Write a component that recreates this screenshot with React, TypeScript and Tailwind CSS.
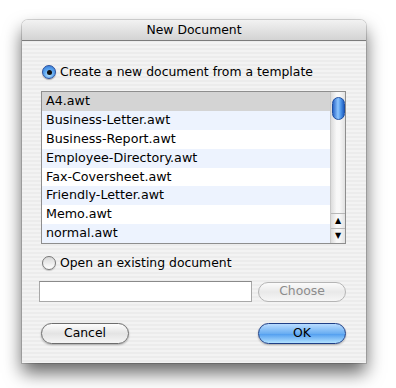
import React from "react";

const files = [
  "A4.awt",
  "Business-Letter.awt",
  "Business-Report.awt",
  "Employee-Directory.awt",
  "Fax-Coversheet.awt",
  "Friendly-Letter.awt",
  "Memo.awt",
  "normal.awt",
];

function Radio({ checked }: { checked?: boolean }) {
  return checked ? (
    <span className="flex h-[14px] w-[14px] shrink-0 items-center justify-center rounded-full border border-[#2a4f9c] bg-[radial-gradient(circle_at_50%_70%,#bfe6ff_0%,#5fa8f0_45%,#2f73d3_100%)] shadow-[0_1px_1px_rgba(0,0,0,0.3)]">
      <span className="h-[5px] w-[5px] rounded-full bg-[#111]" />
    </span>
  ) : (
    <span className="h-[14px] w-[14px] shrink-0 rounded-full border border-[#777] bg-[linear-gradient(#d8d8d8,#ffffff)] shadow-[0_1px_1px_rgba(0,0,0,0.2)]" />
  );
}

export default function App() {
  return (
    <div className="h-[388px] w-[396px] bg-white pl-[22px] pt-[20px] font-['Lucida_Grande','DejaVu_Sans',sans-serif] text-[13px] text-black">
      <div className="flex h-[343px] w-[344px] flex-col overflow-hidden rounded-t-[6px] bg-[repeating-linear-gradient(180deg,#ececec_0px,#ececec_2px,#f3f3f3_2px,#f3f3f3_4px)] shadow-[0_10px_18px_rgba(0,0,0,0.6),0_0_0_1px_rgba(0,0,0,0.15)]">
        {/* title bar */}
        <div className="flex h-[21px] shrink-0 items-center justify-center border-b border-[#7b7b7b] bg-[linear-gradient(#f2f2f2,#d3d3d3)] text-[12.4px] leading-none">
          New Document
        </div>

        <div className="flex flex-col pl-[19px] pr-[20px]">
          <div className="mt-[24px] flex h-[14px] items-center gap-[4px] pl-[1px]">
            <Radio checked />
            <span className="text-[12.4px] leading-none">Create a new document from a template</span>
          </div>

          {/* list */}
          <div className="mt-[12px] flex h-[153px] border border-[#8e8e8e] bg-white">
            <div className="flex flex-1 flex-col">
              {files.map((f, i) => (
                <div
                  key={f}
                  className={`flex h-[19px] items-center pl-[4px] text-[12.7px] leading-none ${
                    i === 0 ? "bg-[#d4d4d4]" : i % 2 === 1 ? "bg-[#edf3fe]" : "bg-white"
                  }`}
                >
                  {f}
                </div>
              ))}
            </div>
            {/* scrollbar */}
            <div className="flex w-[15px] flex-col border-l border-[#c8c8c8] bg-[linear-gradient(90deg,#dcdcdc,#f8f8f8_40%,#f8f8f8_60%,#e2e2e2)]">
              <div className="flex-1 pt-[5px]">
                <div className="mx-auto h-[23px] w-[13px] rounded-full border border-[#1f4fa0] bg-[linear-gradient(90deg,#2a66c9,#8ec6ff_45%,#4e97ea_70%,#1e5cc0)]" />
              </div>
              <div className="flex h-[15px] items-center justify-center border-t border-[#b8b8b8] text-[8px] leading-none text-black">
                ▲
              </div>
              <div className="flex h-[15px] items-center justify-center border-t border-[#b8b8b8] text-[8px] leading-none text-black">
                ▼
              </div>
            </div>
          </div>

          <div className="mt-[12px] flex h-[14px] items-center gap-[4px] pl-[1px]">
            <Radio />
            <span className="text-[12.4px] leading-none">Open an existing document</span>
          </div>

          <div className="ml-[-2px] mt-[11px] flex items-center justify-between">
            <div className="h-[21px] w-[213px] border border-[#a8a8a8] border-t-[#8a8a8a] bg-white" />
            <div className="flex h-[20px] w-[88px] items-center justify-center rounded-full border border-[#b5b5b5] bg-[linear-gradient(#fbfbfb,#e9e9e9_50%,#f6f6f6)] text-[12.4px] leading-none text-[#8c8c8c]">
              Choose
            </div>
          </div>

          <div className="mt-[21px] flex items-center justify-between">
            <div className="flex h-[21px] w-[88px] items-center justify-center rounded-full border border-[#6d6d6d] bg-[linear-gradient(#fdfdfd,#e4e4e4_50%,#f5f5f5)] text-[12.4px] leading-none shadow-[0_1px_2px_rgba(0,0,0,0.3)]">
              Cancel
            </div>
            <div className="flex h-[21px] w-[88px] items-center justify-center rounded-full border border-[#1f3f86] bg-[linear-gradient(#b9dcff,#6aaef2_50%,#4e9bef_51%,#b3e2ff)] text-[12.4px] leading-none shadow-[0_1px_2px_rgba(0,0,0,0.3)]">
              OK
            </div>
          </div>
        </div>
      </div>
    </div>
  );
}
